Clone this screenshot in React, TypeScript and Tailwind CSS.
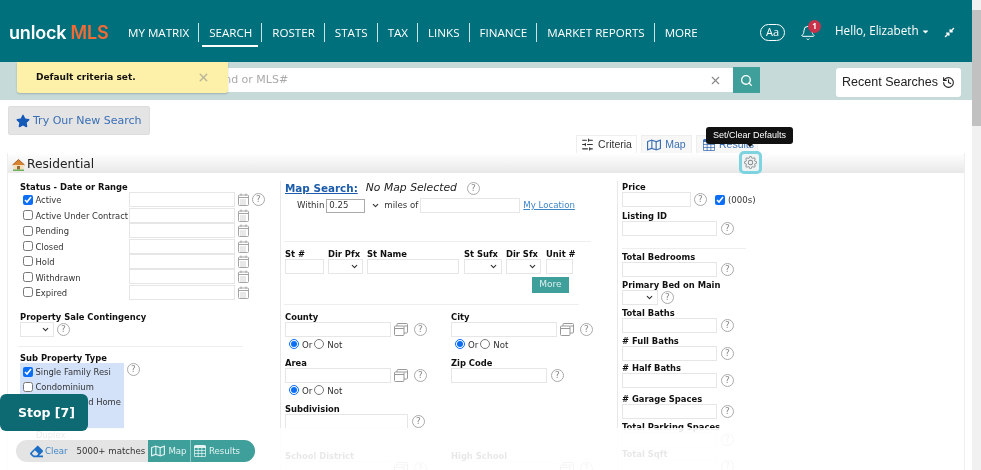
import { useState, type ReactNode } from "react";
import { Bell, ChevronDown, History, Search, X } from "lucide-react";
import { FaCaretDown, FaCompressAlt, FaEraser, FaRegMap, FaStar } from "react-icons/fa";
import { BsGear, BsTable } from "react-icons/bs";
import { LuSlidersHorizontal } from "react-icons/lu";

const navItems = ["MY MATRIX", "SEARCH", "ROSTER", "STATS", "TAX", "LINKS", "FINANCE", "MARKET REPORTS", "MORE"];
const statuses = ["Active", "Active Under Contract", "Pending", "Closed", "Hold", "Withdrawn", "Expired"];

function Help({ className = "" }: { className?: string }) {
  return (
    <span className={`flex h-[13px] w-[13px] shrink-0 items-center justify-center rounded-full border border-[#aaa] text-[9px] leading-none text-[#888] ${className}`}>
      ?
    </span>
  );
}

function CalendarIcon() {
  return (
    <svg width="11" height="13" viewBox="0 0 11 13" fill="none" stroke="#a5a5a5" className="shrink-0">
      <rect x="0.5" y="2" width="10" height="10.5" rx="1" />
      <path d="M0.5 4.5h10M3 0.5v2.5M8 0.5v2.5" />
      <path d="M2.5 7h6M2.5 9h6M2.5 11h6" strokeDasharray="1 1" />
    </svg>
  );
}

function CopyIcon() {
  return (
    <svg width="14" height="13" viewBox="0 0 14 13" fill="none" stroke="#999" className="shrink-0">
      <rect x="0.5" y="3" width="9.5" height="9.5" rx="1" />
      <path d="M3 3V1.5a1 1 0 0 1 1-1h8.5a1 1 0 0 1 1 1V9a1 1 0 0 1-1 1H10M0.5 5.5H10M10 3h3.5" />
    </svg>
  );
}

function HouseIcon() {
  return (
    <svg width="13" height="13" viewBox="0 0 13 13" className="shrink-0">
      <path d="M1.5 6.5h10v5h-10z" fill="#f3dfb8" />
      <path d="M0.5 7 6.5 1.5 12.5 7" fill="#d9822f" stroke="#a8632a" strokeWidth="1" />
      <path d="M5 8h3v3.5H5z" fill="#9a6a3a" />
      <path d="M1 11.5h11V13H1z" fill="#6fae5a" />
    </svg>
  );
}

function TextBox({ className = "" }: { className?: string }) {
  return <input type="text" className={`block h-[15px] shrink-0 border border-[#e6e6e6] bg-white ${className}`} />;
}

function SelectBox({ className = "" }: { className?: string }) {
  return (
    <span className={`relative block h-[15px] shrink-0 border border-[#e6e6e6] bg-white ${className}`}>
      <ChevronDown size={9} strokeWidth={3} className="absolute right-[3px] top-[2px] text-[#333]" />
    </span>
  );
}

function Label({ children, className = "" }: { children: ReactNode; className?: string }) {
  return <div className={`h-[11px] whitespace-nowrap text-[8.4px] font-bold leading-[13px] text-[#111] ${className}`}>{children}</div>;
}

function Field({ label, width, className = "" }: { label: string; width: string; className?: string }) {
  return (
    <div className={className}>
      <Label>{label}</Label>
      <div className="flex items-center gap-[4px]">
        <TextBox className={width} />
        <Help />
      </div>
    </div>
  );
}

function OrNot() {
  return (
    <div className="ml-[4px] flex h-[14px] items-center text-[8.6px] text-[#333]">
      <input type="radio" defaultChecked className="h-[10px] w-[10px] accent-[#0b6ef5]" />
      <span className="ml-[3px] mr-[2px] mt-[2px]">Or</span>
      <input type="radio" className="h-[10px] w-[10px]" />
      <span className="ml-[3px] mt-[2px]">Not</span>
    </div>
  );
}

function TextCheck({ label, checked = false }: { label: string; checked?: boolean }) {
  return (
    <label className="flex h-[15px] items-center whitespace-nowrap pl-[3px] text-[8.4px] text-[#333]">
      <input type="checkbox" defaultChecked={checked} className="h-[10px] w-[10px] shrink-0 accent-[#0b6ef5]" />
      <span className="ml-[2.5px] mt-[2px]">{label}</span>
    </label>
  );
}

function AreaField({ label, radios = true, className = "" }: { label: string; radios?: boolean; className?: string }) {
  return (
    <div className={className}>
      <Label>{label}</Label>
      <div className="flex items-center gap-[3px]">
        <TextBox className="w-[106px]" />
        <CopyIcon />
        <Help className="ml-[3px]" />
      </div>
      {radios && <OrNot />}
    </div>
  );
}

export default function App() {
  const [tab] = useState("Criteria");

  return (
    <div className="relative flex h-[470px] w-[981px] overflow-hidden bg-white font-['DejaVu_Sans',sans-serif] blur-[0.3px]">
      <div className="flex w-[972px] flex-col">
        <header className="flex h-[62px] shrink-0 items-center bg-[#00707c] pl-[9px] pr-[17px] font-['Open_Sans',sans-serif] text-white">
          <div className="mt-[2px] w-[109px] shrink-0 whitespace-nowrap font-['Inter',sans-serif] text-[18px] font-semibold tracking-[-0.2px]">
            unlock <span className="text-[#f26b36]">MLS</span>
          </div>
          <nav className="mt-[2px] flex shrink-0 items-center">
            {navItems.map((item, i) => (
              <div key={item} className={`relative flex h-[19px] items-center whitespace-nowrap pl-[10px] pr-[9px] pt-[1px] text-[11.6px] ${i < navItems.length - 1 ? "border-r border-white/80" : ""}`}>
                {item}
                {item === "SEARCH" && <span className="absolute -bottom-[5px] left-[3px] right-[3px] h-[2px] bg-white" />}
              </div>
            ))}
          </nav>
          <span className="ml-auto mt-[2px] flex h-[17px] w-[25px] shrink-0 items-center justify-center rounded-full border border-white text-[11px]">Aa</span>
          <span className="relative ml-[15px] mt-[3px] shrink-0">
            <Bell size={16} strokeWidth={1.5} />
            <span className="absolute -right-[5px] -top-[5px] flex h-[13px] w-[13px] items-center justify-center rounded-full bg-[#c8324a] text-[8px] font-bold">1</span>
          </span>
          <span className="ml-[19px] w-[82px] shrink-0 whitespace-nowrap text-[11.7px]">Hello, Elizabeth</span>
          <FaCaretDown size={9} className="ml-[4px] shrink-0" />
          <FaCompressAlt size={11} className="ml-[14px] mt-[2px] shrink-0" />
        </header>

        <div className="flex h-[38px] shrink-0 items-start bg-[#c5dad9] pl-[17px] pr-[11px]">
          <div className="mt-[6px] flex h-[24px] w-[716px] items-center justify-end bg-white pr-[11px]">
            <span className="mr-[auto] mt-[1px] pl-[211px] text-[11px] text-[#aaa]">
              <span className="-ml-[58px]">Search Land or MLS#</span>
            </span>
            <X size={13} className="text-[#888]" />
          </div>
          <button className="mt-[5px] flex h-[26px] w-[27px] items-center justify-center bg-[#3f9f9b] text-white">
            <Search size={13} strokeWidth={2.5} />
          </button>
          <button className="ml-[76px] mt-[6px] flex h-[29px] w-[125px] items-center justify-center gap-[4px] rounded-[3px] bg-white font-['Liberation_Sans',sans-serif] text-[12.5px] text-[#222]">
            Recent Searches
            <History size={13} />
          </button>
        </div>

        <div className="flex min-h-0 flex-1 flex-col px-[7px]">
          <button className="ml-[1px] mt-[6px] flex h-[29px] w-[142px] shrink-0 items-center gap-[3px] whitespace-nowrap rounded-[2px] border border-[#ddd] bg-[#e4e4e4] pl-[7px] text-[11px] text-[#3a6fb5]">
            <FaStar size={14} className="text-[#1559b8]" />
            <span className="mt-[2px]">Try Our New Search</span>
          </button>

          <div className="flex h-[18px] shrink-0 items-stretch justify-end gap-[4px] font-['Liberation_Sans',sans-serif] text-[10.5px]">
            <span className={`flex w-[61px] items-center justify-center gap-[4px] border border-b-0 border-[#eee] ${tab === "Criteria" ? "text-[#333]" : ""}`}>
              <LuSlidersHorizontal size={13} />
              Criteria
            </span>
            <span className="flex w-[51px] items-center justify-center gap-[4px] border border-b-0 border-[#eee] bg-[#f7f7f7] text-[#3a6fb5]">
              <FaRegMap size={14} />
              Map
            </span>
            <span className="flex w-[62px] items-center justify-start gap-[4px] border border-b-0 border-[#eee] bg-[#f7f7f7] pl-[6px] text-[#3a6fb5]">
              <BsTable size={12} />
              Results
            </span>
            <span className="w-[203px]" />
          </div>

          <section className="flex min-h-0 flex-1 flex-col overflow-hidden border-x border-[#eee]">
            <div className="flex h-[20px] shrink-0 items-center gap-[2px] bg-gradient-to-b from-white to-[#e8e8e8] pl-[4px] pt-[2px] text-[12.2px] text-[#222]">
              <HouseIcon />
              Residential
            </div>

            <div className="flex min-h-0 flex-1 pt-[8px]">
              {/* status column */}
              <div className="w-[272px] shrink-0 pl-[12px]">
                <Label>Status - Date or Range</Label>
                {statuses.map((s, i) => (
                  <div key={s} className="flex h-[15.45px] items-center">
                    <div className="w-[109px]">
                      <TextCheck label={s} checked={i === 0} />
                    </div>
                    <TextBox className="w-[106px]" />
                    <span className="ml-[3px]"><CalendarIcon /></span>
                    {i === 0 && <Help className="ml-[3px]" />}
                  </div>
                ))}
                <Label className="mt-[11px]">Property Sale Contingency</Label>
                <div className="flex items-center">
                  <SelectBox className="w-[34px]" />
                  <Help className="ml-[3px]" />
                </div>
                <div className="-ml-[2px] mt-[9px] w-[225px] border-t border-[#eee]" />
                <Label className="mt-[5px]">Sub Property Type</Label>
                <div className="flex items-start">
                  <div className="w-[104px] bg-[#d3e2f9] pb-[5px] pt-[1px]">
                    <TextCheck label="Single Family Resi" checked />
                    <TextCheck label="Condominium" />
                    <TextCheck label="Manufactured Home" />
                    <TextCheck label="Townhouse" />
                  </div>
                  <Help className="ml-[3px]" />
                </div>
                <div className="pl-[16px] text-[8.4px] text-[#333]">Duplex</div>
              </div>

              {/* location column */}
              <div className="w-[337px] shrink-0 border-l border-[#e8e8e8] pl-[4px]">
                <div className="flex h-[15px] items-center whitespace-nowrap">
                  <a className="text-[10.4px] font-bold text-[#1c5cab] underline">Map Search:</a>
                  <i className="ml-[8px] text-[10.8px] text-[#222]">No Map Selected</i>
                  <Help className="ml-[10px]" />
                </div>
                <div className="ml-[12px] mt-[2px] flex h-[15px] items-center whitespace-nowrap text-[8.6px] text-[#333]">
                  Within
                  <span className="relative ml-[2px] flex h-[14px] w-[57px] items-center">
                    <span className="flex h-[14px] w-[39px] items-center border border-[#aaa] pl-[2px]">0.25</span>
                    <ChevronDown size={9} strokeWidth={3} className="ml-[6px]" />
                  </span>
                  <span className="ml-[1px]">miles of</span>
                  <TextBox className="ml-[2px] w-[100px]" />
                  <a className="ml-[3px] text-[#3f86c7] underline">My Location</a>
                </div>
                <div className="-ml-[1px] mt-[28px] w-[307px] border-t border-[#eee]" />
                <div className="mt-[6px] flex items-start">
                  <div className="w-[39px]"><Label>St #</Label><TextBox className="w-[39px]" /></div>
                  <div className="ml-[4px] w-[35px]"><Label>Dir Pfx</Label><SelectBox className="w-[35px]" /></div>
                  <div className="ml-[4px] w-[92px]"><Label>St Name</Label><TextBox className="w-[92px]" /></div>
                  <div className="ml-[5px] w-[38px]"><Label>St Sufx</Label><SelectBox className="w-[38px]" /></div>
                  <div className="ml-[4px] w-[35px]"><Label>Dir Sfx</Label><SelectBox className="w-[35px]" /></div>
                  <div className="ml-[5px] w-[27px]"><Label>Unit #</Label><TextBox className="w-[27px]" /></div>
                </div>
                <div className="flex w-[284px] justify-end">
                  <button className="mt-[3px] h-[16px] w-[37px] bg-[#3f9f9b] text-[9px] text-[#d9efed]">More</button>
                </div>
                <div className="-ml-[1px] mt-[11px] w-[295px] border-t border-[#eee]" />
                <div className="mt-[6px] flex items-start">
                  <div className="w-[166px]">
                    <AreaField label="County" />
                    <AreaField label="Area" className="mt-[6px]" />
                    <Field label="Subdivision" width="w-[123px]" className="mt-[6px]" />
                  </div>
                  <div>
                    <AreaField label="City" />
                    <Field label="Zip Code" width="w-[96px]" className="mt-[6px]" />
                  </div>
                </div>
                <div className="mt-[21px] flex items-start">
                  <AreaField label="School District" radios={false} className="w-[166px]" />
                  <AreaField label="High School" radios={false} />
                </div>
              </div>

              {/* details column */}
              <div className="flex-1 border-l border-[#e8e8e8] pl-[4px]">
                <Label>Price</Label>
                <div className="flex items-center text-[8.6px] text-[#333]">
                  <TextBox className="w-[69px]" />
                  <Help className="ml-[3px]" />
                  <input type="checkbox" defaultChecked className="ml-[8px] h-[10px] w-[10px] accent-[#0b6ef5]" />
                  <span className="ml-[3px] mt-[2px]">(000s)</span>
                </div>
                <Field label="Listing ID" width="w-[95px]" className="mt-[3px]" />
                <div className="mt-[12px] w-[124px] border-t border-[#eee]" />
                <Field label="Total Bedrooms" width="w-[95px]" className="mt-[2px]" />
                <div className="mt-[2px]">
                  <Label>Primary Bed on Main</Label>
                  <div className="flex items-center">
                    <SelectBox className="w-[36px]" />
                    <Help className="ml-[3px]" />
                  </div>
                </div>
                <Field label="Total Baths" width="w-[95px]" className="mt-[2px]" />
                <Field label="# Full Baths" width="w-[95px]" className="mt-[2px]" />
                <Field label="# Half Baths" width="w-[95px]" className="mt-[1px]" />
                <Field label="# Garage Spaces" width="w-[95px]" className="mt-[5px]" />
                <Field label="Total Parking Spaces" width="w-[95px]" className="mt-[2px]" />
                <Field label="Total Sqft" width="w-[95px]" className="mt-[1px]" />
              </div>
            </div>
          </section>
        </div>
      </div>

      {/* scrollbar */}
      <div className="flex w-[9px] shrink-0 flex-col bg-[#f1f1f1] pt-[10px]">
        <div className="h-[116px] bg-[#c1c1c1]" />
      </div>

      {/* fade over the part of the form under the action bar */}
      <div className="absolute left-0 top-[428px] h-[42px] w-[963px] bg-white/90" />

      {/* toast */}
      <div className="absolute left-[17px] top-[62px] flex h-[31px] w-[211px] items-center justify-between rounded-b-[3px] bg-[#fdf0a8] pl-[19px] pr-[18px] text-[9px] font-bold text-[#111] shadow-[0_1px_2px_rgba(0,0,0,0.2)]">
        Default criteria set.
        <X size={13} strokeWidth={2.5} className="text-[#b9b59a]" />
      </div>

      {/* tooltip and focused gear */}
      <div className="absolute left-[706px] top-[127px] flex h-[17px] w-[87px] items-center justify-center rounded-[3px] bg-[#111] font-['Liberation_Sans',sans-serif] text-[9px] text-white">
        Set/Clear Defaults
      </div>
      <div className="absolute left-[746px] top-[143px] h-0 w-0 border-x-[4px] border-t-[4px] border-x-transparent border-t-[#111]" />
      <div className="absolute left-[739px] top-[151px] flex h-[23px] w-[23px] items-center justify-center rounded-[5px] border-[3px] border-[#7dd3e0] bg-[#eef3f4]">
        <BsGear size={13} className="text-[#888]" />
      </div>

      {/* stop button */}
      <button className="absolute left-0 top-[394px] h-[37px] w-[88px] rounded-[6px] bg-[#0e6a72] pl-[5px] pt-[2px] text-[12.5px] font-bold text-white">
        Stop [7]
      </button>

      {/* action bar */}
      <div className="absolute left-[16px] top-[440px] flex h-[22px] w-[239px] items-center overflow-hidden rounded-full bg-[#e4e4e4] text-[8.6px]">
        <FaEraser size={13} className="ml-[14px] text-[#1c6fc4]" />
        <span className="ml-[2px] text-[#3f86c7]">Clear</span>
        <span className="ml-[9px] w-[70px] whitespace-nowrap text-[#333]">5000+ matches</span>
        <div className="ml-auto flex h-full w-[107px] bg-[#3f9f9b] text-[#e3f3f2]">
          <span className="flex w-[43px] items-center justify-center gap-[3px] border-r border-[#8cc9c6]">
            <FaRegMap size={14} />
            Map
          </span>
          <span className="flex flex-1 items-center gap-[3px] pl-[3px]">
            <BsTable size={12} />
            Results
          </span>
        </div>
      </div>
    </div>
  );
}
